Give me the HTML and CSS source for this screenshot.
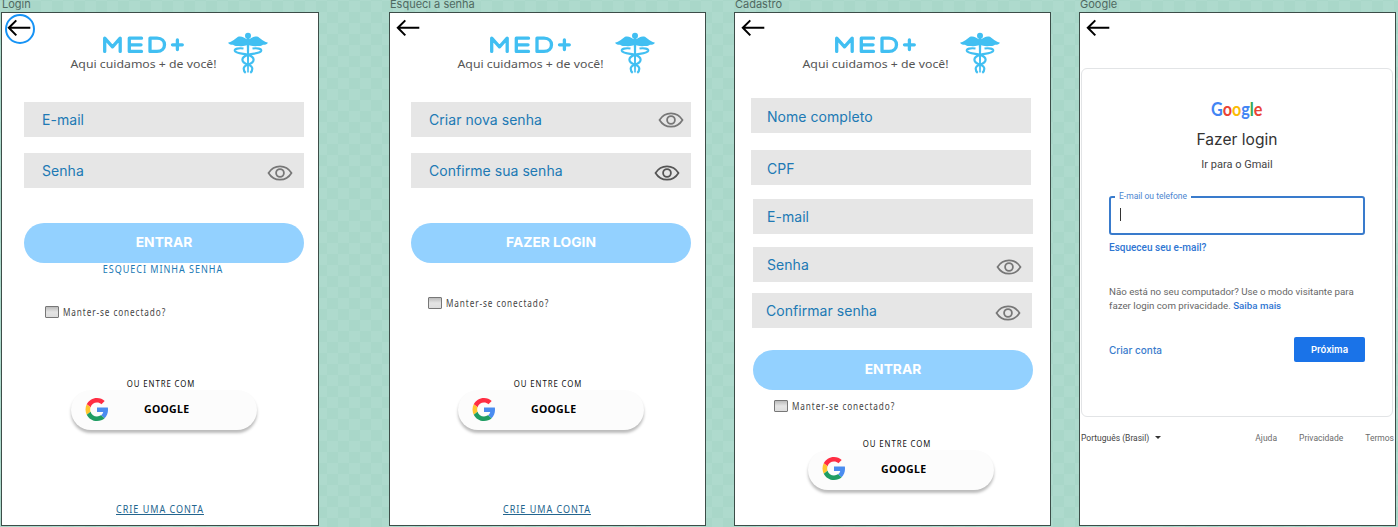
FILE: index.html
```
<!DOCTYPE html>
<html lang="pt-BR">
<head>
<meta charset="utf-8">
<title>MED+</title>
<link rel="stylesheet" href="styles.css">
</head>
<body>
<svg class="defs" width="0" height="0" aria-hidden="true">
  <symbol id="arrow" viewBox="0 0 24 18"><path d="M9.3 1.4 1.8 8.8l7.5 7.6M2 8.8h21.3" fill="none" stroke="#000" stroke-width="2"/></symbol>
  <symbol id="eye" viewBox="0 0 26 16"><path d="M1.500 8C7-.9 19-.9 24.500 8 19 16.900 7 16.900 1.500 8Z" fill="none" stroke="currentColor" stroke-width="1.700"/><circle cx="13" cy="8" r="3.900" fill="none" stroke="currentColor" stroke-width="1.800"/></symbol>
  <symbol id="g" viewBox="0 0 48 48"><path fill="#ff2d43" d="M24 9.500c3.540 0 6.710 1.220 9.210 3.600l6.850-6.850C35.900 2.380 30.470 0 24 0 14.620 0 6.510 5.380 2.560 13.220l7.980 6.190C12.430 13.720 17.740 9.500 24 9.500z"/><path fill="#4a8cf0" d="M46.980 24.550c0-1.570-.150-3.090-.380-4.550H24v9.020h12.940c-.580 2.960-2.260 5.480-4.780 7.180l7.730 6c4.510-4.180 7.090-10.360 7.090-17.650z"/><path fill="#ffc52e" d="M10.530 28.590c-.480-1.450-.760-2.990-.760-4.590s.270-3.140.760-4.590l-7.980-6.190C.920 16.460 0 20.120 0 24c0 3.880.920 7.540 2.560 10.780l7.970-6.190z"/><path fill="#1f9d63" d="M24 48c6.480 0 11.930-2.130 15.890-5.810l-7.730-6c-2.150 1.450-4.920 2.300-8.160 2.300-6.260 0-11.570-4.220-13.470-9.910l-7.980 6.190C6.510 42.620 14.620 48 24 48z"/></symbol>
  <symbol id="caduceus" viewBox="0 0 42 42"><g fill="#41bff2"><circle cx="21" cy="3.300" r="3"/><path d="M20.500 7C17 5.200 15 3.200 11 4.200 8 6.500 5 9.500 1 10.200 2 12 4 12.300 6 12.300 7.500 13.700 10 13.800 12 13.400 15 14 18 13.400 21 12.500 24 13.400 27 14 30 13.400 32 13.800 34.500 13.700 36 12.300 38 12.300 40 12 41 10.200 37 9.500 34 6.500 31 4.200 27 3.200 25 5.200 21.500 7Z"/><path d="M19.700 5h2.600l-.5 35h-1.600z"/></g><g fill="none" stroke="#41bff2" stroke-width="2.200"><path d="M16.500 16c-5-.700-9 .200-8.700 2.200.5 2.600 9 3 13.200 4.200 4.500 1.300 5.600 3 5.600 4.800 0 2.500-3 4-5.600 4.800-3 1-4.300 2.500-4.300 4.300 0 1.500.6 3 2 4"/><path d="M25.500 16c5-.700 9 .200 8.700 2.200-.5 2.600-9 3-13.200 4.200-4.500 1.300-5.600 3-5.600 4.800 0 2.500 3 4 5.600 4.800 3 1 4.300 2.500 4.300 4.300 0 1.500-.6 3-2 4"/></g></symbol>
  <symbol id="brand" viewBox="0 0 200 46">
    <g fill="none" stroke="#41bff2" stroke-width="3.300" stroke-linecap="round" stroke-linejoin="round"><path d="M34.700 21.400V8.200L42.500 16.800 50.200 8.200V21.400M71.500 8.200H59.300V21.400H71.500M60 14.800H71M80 8.200H87C97 8.200 97 21.400 87 21.400H80ZM102.500 14.800H112.300M107.400 10V19.600"/></g>
    <text class="tagline" x="0.500" y="37.500" textLength="146" lengthAdjust="spacingAndGlyphs">Aqui cuidamos + de você!</text>
    <use href="#caduceus" x="157" y="2.500" width="42" height="42"/>
  </symbol>
</svg>

<main class="canvas">
  <section class="artboard login">
    <h2 class="name">Login</h2>
    <div class="screen">
      <header class="top"><a class="back selected"><svg><use href="#arrow"/></svg></a><svg class="brand" role="img" aria-label="MED+"><use href="#brand"/></svg></header>
      <div class="fields">
        <div class="field">E-mail</div>
        <div class="field">Senha<svg class="eye"><use href="#eye"/></svg></div>
      </div>
      <button class="primary">ENTRAR</button>
      <a class="forgot">ESQUECI MINHA SENHA</a>
      <label class="keep"><i class="box"></i><span>Manter-se conectado?</span></label>
      <p class="or">OU ENTRE COM</p>
      <button class="google"><svg><use href="#g"/></svg>GOOGLE</button>
      <a class="create">CRIE UMA CONTA</a>
    </div>
  </section>

  <section class="artboard reset">
    <h2 class="name">Esqueci a senha</h2>
    <div class="screen">
      <header class="top"><a class="back"><svg><use href="#arrow"/></svg></a><svg class="brand" role="img" aria-label="MED+"><use href="#brand"/></svg></header>
      <div class="fields">
        <div class="field">Criar nova senha<svg class="eye high"><use href="#eye"/></svg></div>
        <div class="field">Confirme sua senha<svg class="eye dark"><use href="#eye"/></svg></div>
      </div>
      <button class="primary">FAZER LOGIN</button>
      <label class="keep"><i class="box"></i><span>Manter-se conectado?</span></label>
      <p class="or">OU ENTRE COM</p>
      <button class="google"><svg><use href="#g"/></svg>GOOGLE</button>
      <a class="create">CRIE UMA CONTA</a>
    </div>
  </section>

  <section class="artboard signup">
    <h2 class="name">Cadastro</h2>
    <div class="screen">
      <header class="top"><a class="back"><svg><use href="#arrow"/></svg></a><svg class="brand" role="img" aria-label="MED+"><use href="#brand"/></svg></header>
      <div class="fields">
        <div class="field outset">Nome completo</div>
        <div class="field outset cpf">CPF</div>
        <div class="field">E-mail</div>
        <div class="field">Senha<svg class="eye"><use href="#eye"/></svg></div>
        <div class="field confirm">Confirmar senha<svg class="eye"><use href="#eye"/></svg></div>
      </div>
      <button class="primary">ENTRAR</button>
      <label class="keep"><i class="box"></i><span>Manter-se conectado?</span></label>
      <p class="or">OU ENTRE COM</p>
      <button class="google"><svg><use href="#g"/></svg>GOOGLE</button>
    </div>
  </section>

  <section class="artboard account">
    <h2 class="name">Google</h2>
    <div class="screen">
      <header class="top"><a class="back"><svg><use href="#arrow"/></svg></a></header>
      <div class="card">
        <svg class="wordmark" viewBox="0 0 54 22"><text x="1" y="15.500" textLength="51.500" lengthAdjust="spacingAndGlyphs"><tspan fill="#4285f4">G</tspan><tspan fill="#ea4335">o</tspan><tspan fill="#fbbc05">o</tspan><tspan fill="#4285f4">g</tspan><tspan fill="#34a853">l</tspan><tspan fill="#ea4335">e</tspan></text></svg>
        <h1>Fazer login</h1>
        <p class="sub">Ir para o Gmail</p>
        <fieldset><legend>E-mail ou telefone</legend><i class="caret"></i></fieldset>
        <a class="lost">Esqueceu seu e-mail?</a>
        <p class="guest">Não está no seu computador? Use o modo visitante para<br>fazer login com privacidade. <b>Saiba mais</b></p>
        <div class="actions"><a>Criar conta</a><button>Próxima</button></div>
      </div>
      <footer><span class="lang">Português (Brasil)<i></i></span><nav><a>Ajuda</a><a>Privacidade</a><a>Termos</a></nav></footer>
    </div>
  </section>
</main>
</body>
</html>
```
FILE: styles.css
```
* { box-sizing: border-box; margin: 0; padding: 0; }
body {
  width: 1398px; height: 527px; overflow: hidden;
  font-family: Inter, sans-serif;
  background: repeating-conic-gradient(#a9d7c9 0 25%, #aedacd 0 50%) -3px 1px / 22px 22px;
}
.defs { position: absolute; }
symbol { overflow: visible; }
.canvas { display: grid; grid-template-columns: 388px 345px 345px 319px; padding-left: 1px; }
.name { height: 12px; line-height: 8px; padding-left: 1px; font-size: 11px; font-weight: 400; color: #4f6961; white-space: nowrap; }
.screen { display: flex; flex-direction: column; align-items: flex-start; width: 318px; height: 514px; border: 1px solid #3c4d48; background: #fff; }
button { border: 0; font-family: inherit; }

/* Header */
.top { display: flex; height: 89px; width: 100%; }
.back { display: flex; width: 30px; height: 30px; margin: 0 0 0 4px; padding: 6px 0 0 2px; border-radius: 50%; flex: none; }
.back svg { width: 24px; height: 18px; flex: none; }
.selected { border: 2px solid #1693f5; padding: 3px 0 0 0; margin: 1px 1px 0 3px; }
.brand { width: 200px; height: 46px; margin: 17px 0 0 34px; overflow: visible; }
.tagline { font-family: "Noto Sans", sans-serif; font-size: 11.500px; fill: #555; }

/* Form */
.fields { display: flex; flex-direction: column; gap: 16px; margin-left: 22px; }
.field { display: flex; align-items: center; justify-content: space-between; width: 280px; height: 35px; padding: 0 11px 0 18px; background: #e6e6e6; color: #2079b4; font-size: 14px; letter-spacing: .05px; }
.eye { width: 26px; height: 16px; margin-top: 5px; color: #777; }
.eye.high { margin: 0 -4px 0 0; }
.eye.dark { color: #555; }
.primary { width: 280px; height: 40px; margin: 35px 0 0 22px; padding-bottom: 2px; border-radius: 20px; background: #93d1ff; color: #fff; font-size: 13.800px; font-weight: 700; }
.forgot, .keep span, .or, .create { font-family: "Noto Sans", sans-serif; white-space: nowrap; transform: scaleX(.82); }
.forgot { width: 280px; height: 14px; margin: -1px 0 0 21px; line-height: 14px; text-align: center; color: #2079b4; font-size: 11px; letter-spacing: 1.200px; }
.keep { display: flex; align-items: center; gap: 4px; height: 14px; margin: 29px 0 0 43px; color: #444; font-size: 10px; letter-spacing: 1.100px; }
.keep span { transform-origin: left; line-height: 12px; }
.box { width: 14px; height: 12px; border: 1px solid #777; border-radius: 1px; background: linear-gradient(#bbb, #e4e4e4 50%, #ddd); }
.or { width: 186px; height: 14px; margin: 58px 0 0 66px; line-height: 14px; text-align: center; color: #111; font-size: 9.500px; letter-spacing: 1.100px; }
.google { display: flex; align-items: center; width: 186px; height: 40px; margin: -1px 0 0 69px; padding: 0 0 2px 14px; gap: 35px; border-radius: 20px; background: #fcfcfc; color: #000; font-family: "Noto Sans", sans-serif; font-size: 10.500px; font-weight: 700; letter-spacing: .3px; box-shadow: 0 3px 3px rgba(0,0,0,.27); }
.google svg { width: 24px; height: 23px; }
.create { margin: 71px 0 0 114px; height: 16px; line-height: 16px; color: #23658e; font-size: 11px; letter-spacing: 1.200px; text-decoration: underline; transform-origin: left; }

.reset .brand, .signup .brand { margin-left: 33px; }
.reset .fields { margin-left: 21px; }
.reset .primary { margin-left: 21px; }
.reset .keep { margin: 33px 0 0 38px; }
.reset .or { margin: 67px 0 0 65px; }
.reset .google { margin-left: 68px; }
.reset .create { margin-left: 113px; }

.signup .top { height: 85px; }
.signup .fields { width: 280px; margin-left: 18px; gap: 13px; }
.signup .field { padding-left: 14px; }
.signup .outset { margin-left: -2px; padding: 1px 0 0 16px; }
.signup .cpf { margin-top: 4px; margin-bottom: 1px; }
.signup .confirm { margin: -2px 0 0 -1px; }
.signup .primary { margin: 21.500px 0 0 18px; }
.signup .keep { margin: 9px 0 0 39px; }
.signup .or { margin: 24px 0 0 69px; }
.signup .google { margin-left: 73px; }
.reset .screen, .signup .screen, .account .screen { width: 317px; }

/* Google account screen */
.account { font-family: Roboto, sans-serif; }
.account .name { font-family: Inter, sans-serif; }
.account .top { height: 55px; }
.card { display: flex; flex-direction: column; width: 312px; height: 349px; margin-left: 1px; padding: 31px 27px 0; border: 1px solid #e2e4e6; border-radius: 6px; color: #666; }
.wordmark { width: 54px; height: 22px; margin: 0 auto; font-family: Lato, sans-serif; font-size: 18px; font-weight: 700; }
h1 { height: 26px; margin-top: 5px; text-align: center; font: 400 15.600px/26px Inter, sans-serif; color: #333; }
.sub { height: 18px; margin-top: 3px; line-height: 18px; text-align: center; font-size: 11px; color: #444; }
fieldset { height: 43px; margin-top: 18px; padding: 0 8px; border: 2px solid #397bcc; border-radius: 3px; }
legend { margin-left: -4px; padding: 0 4px; height: 9px; font-size: 8.500px; line-height: 9px; color: #4c86d0; }
.caret { display: block; width: 1px; height: 13px; margin: 7px 0 0 1px; background: #333; }
.lost { margin-top: 4px; height: 18px; line-height: 18px; font-size: 10px; font-weight: 500; color: #2f76d2; }
.guest { margin-top: 28px; font-size: 9.720px; line-height: 14px; white-space: nowrap; }
.guest b { font-weight: 500; color: #2f76d2; }
.actions { display: flex; justify-content: space-between; align-items: center; margin-top: 24px; font: 500 10px Inter, sans-serif; color: #397bcc; }
.actions button { width: 71px; height: 25px; border-radius: 2px; background: #1a73e8; color: #fff; font: 600 9.500px Inter, sans-serif; }
footer { display: flex; justify-content: space-between; width: 313px; margin: 14px 0 0 1px; font-size: 8.500px; line-height: 14px; color: #6b6b6b; }
.lang { color: #444; }
.lang i { display: inline-block; margin-left: 6px; border: 3px solid transparent; border-top-color: #333; border-bottom: 0; vertical-align: 2px; }
nav { display: flex; gap: 22px; }
```
